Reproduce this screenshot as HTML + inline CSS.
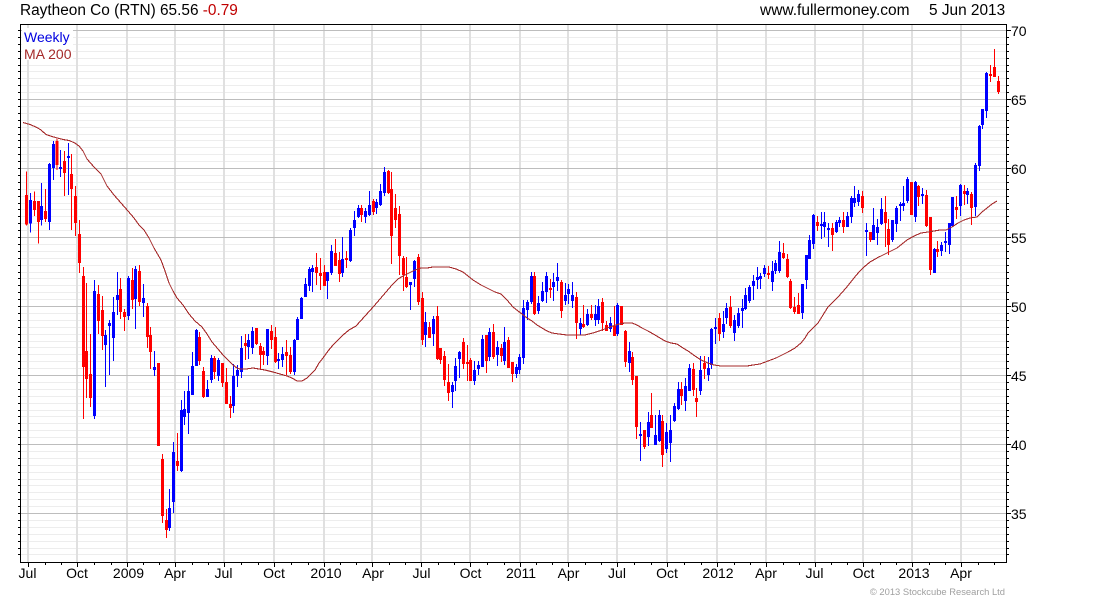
<!DOCTYPE html>
<html><head><meta charset="utf-8"><title>Raytheon Co (RTN)</title>
<style>
html,body{margin:0;padding:0;background:#fff;width:1100px;height:600px;overflow:hidden}
svg{display:block;position:absolute;left:0;top:0}
text{font-family:"Liberation Sans",Arial,sans-serif}
</style></head><body>
<svg width="1100" height="600" viewBox="0 0 1100 600" xmlns="http://www.w3.org/2000/svg">
<defs>
<clipPath id="c"><rect x="21" y="25" width="985" height="537"/></clipPath>
<path id="h" d="M18 37.5H1009M18 44.5H1009M18 51.5H1009M18 58.5H1009M18 65.5H1009M18 71.5H1009M18 78.5H1009M18 85.5H1009M18 92.5H1009M18 106.5H1009M18 113.5H1009M18 120.5H1009M18 127.5H1009M18 134.5H1009M18 140.5H1009M18 147.5H1009M18 154.5H1009M18 161.5H1009M18 175.5H1009M18 182.5H1009M18 189.5H1009M18 196.5H1009M18 203.5H1009M18 209.5H1009M18 216.5H1009M18 223.5H1009M18 230.5H1009M18 244.5H1009M18 251.5H1009M18 258.5H1009M18 265.5H1009M18 272.5H1009M18 278.5H1009M18 285.5H1009M18 292.5H1009M18 299.5H1009M18 313.5H1009M18 320.5H1009M18 327.5H1009M18 334.5H1009M18 341.5H1009M18 347.5H1009M18 354.5H1009M18 361.5H1009M18 368.5H1009M18 382.5H1009M18 389.5H1009M18 396.5H1009M18 403.5H1009M18 410.5H1009M18 416.5H1009M18 423.5H1009M18 430.5H1009M18 437.5H1009M18 451.5H1009M18 458.5H1009M18 465.5H1009M18 472.5H1009M18 479.5H1009M18 485.5H1009M18 492.5H1009M18 499.5H1009M18 506.5H1009M18 520.5H1009M18 527.5H1009M18 534.5H1009M18 541.5H1009M18 548.5H1009M18 554.5H1009"/>
<path id="m" d="M18 30.5H1011M18 99.5H1011M18 168.5H1011M18 237.5H1011M18 306.5H1011M18 375.5H1011M18 444.5H1011M18 513.5H1011"/>
</defs>
<g shape-rendering="crispEdges" fill="none" stroke-width="1">
<use href="#h" stroke="#000"/>
<use href="#m" stroke="#000"/>
<rect x="21" y="25" width="985" height="537" fill="#fff" stroke="none"/>
<use href="#h" stroke="#ededed" clip-path="url(#c)"/>
<path stroke="#e0e0e0" stroke-width="2" d="M28 25V562M77 25V562M127 25V562M175 25V562M224 25V562M274 25V562M324 25V562M372 25V562M421 25V562M470 25V562M520 25V562M568 25V562M617 25V562M667 25V562M717 25V562M766 25V562M815 25V562M863 25V562M912 25V562M961 25V562"/>
<use href="#m" stroke="#bdbdbd" clip-path="url(#c)"/>
<path stroke="#000" d="M20.5 24.5H1006.5V562.5H20.5Z"/>
<path stroke="#000" d="M28.5 563V567M77.5 563V567M127.5 563V567M175.5 563V567M224.5 563V567M274.5 563V567M324.5 563V567M372.5 563V567M421.5 563V567M470.5 563V567M520.5 563V567M568.5 563V567M617.5 563V567M667.5 563V567M717.5 563V567M766.5 563V567M815.5 563V567M863.5 563V567M912.5 563V567M961.5 563V567M45.5 563V565M61.5 563V565M94.5 563V565M111.5 563V565M143.5 563V565M159.5 563V565M192.5 563V565M208.5 563V565M241.5 563V565M258.5 563V565M291.5 563V565M308.5 563V565M340.5 563V565M356.5 563V565M389.5 563V565M405.5 563V565M438.5 563V565M454.5 563V565M487.5 563V565M504.5 563V565M536.5 563V565M552.5 563V565M585.5 563V565M601.5 563V565M634.5 563V565M651.5 563V565M684.5 563V565M701.5 563V565M734.5 563V565M750.5 563V565M783.5 563V565M799.5 563V565M831.5 563V565M847.5 563V565M880.5 563V565M896.5 563V565M929.5 563V565M945.5 563V565M978.5 563V565M994.5 563V565"/>
</g>
<rect x="22" y="28" width="51" height="32" fill="#fff"/>

<!-- candles strip 1 -->
<g fill="none" shape-rendering="crispEdges" transform="translate(24.1667 135) scale(.33333)">
<path stroke="#f00" stroke-width="3" d="M7 110V272M31 170V243M43 198V326M64 162V261M98 12V105M121 48V183M142 57V285M154 153V303M166 255V414M178 396V852M187 444V789M199 597V816M223 450V597M235 483V645M289 429V552M301 522V588M325 399V522M346 390V513M370 504V639M379 576V702M403 684V933M415 957V1164M427 1122V1209M460 894V1008"/>
<path stroke="#f00" stroke-width="9" d="M7 180V268M31 198V225M43 198V261M64 228V252M98 18V90M121 78V114M142 117V162M154 183V264M166 297V384M178 423V696M187 648V732M199 717V789M223 477V558M235 525V603M289 462V531M301 531V546M325 435V495M346 408V501M370 513V606M379 600V651M403 684V933M415 972V1143M427 1155V1185M460 978V993"/>
<path stroke="#00f" stroke-width="3" d="M19 174V293M52 144V272M76 84V285M88 18V135M109 45V126M133 24V180M211 435V852M244 585V756M256 555V720M268 486V678M280 411V540M313 423V555M334 393V582M358 447V546M391 648V723M436 1062V1188M448 921V1134M472 795V1011M481 768V870M493 723V897"/>
<path stroke="#00f" stroke-width="9" d="M19 195V266M52 213V255M76 87V261M88 27V99M109 96V102M133 63V69M211 468V843M244 600V630M256 564V573M268 531V609M280 480V495M313 429V543M334 402V492M358 489V504M391 696V705M436 1119V1179M448 951V1101M472 825V1008M481 822V846M493 768V834"/>
</g>
<!-- strip 2 -->
<g fill="none" shape-rendering="crispEdges" transform="translate(190.1667 165) scale(.33333)">
<path stroke="#f00" stroke-width="3" d="M28 501V600M40 606V699M73 573V642M97 594V666M109 609V717M121 693V759M166 507V585M199 489V540M211 534V612M220 546V600M244 480V552M256 486V594M289 525V630M301 546V627M379 264V360M391 279V375M403 300V363M436 222V303M448 261V351M469 258V309"/>
<path stroke="#f00" stroke-width="9" d="M28 516V588M40 618V696M73 579V621M97 594V654M109 651V717M121 717V729M166 534V543M199 489V537M211 543V570M220 558V570M244 498V525M256 516V591M289 561V573M301 570V621M379 306V324M391 324V333M403 321V363M436 264V303M448 285V327M469 279V285"/>
<path stroke="#00f" stroke-width="3" d="M7 561V690M19 492V603M52 645V696M64 570V654M85 579V648M130 597V744M142 600V666M154 513V639M175 507V582M187 486V567M232 492V600M265 564V612M277 546V606M313 522V630M322 456V525M334 396V462M346 339V396M358 306V378M367 300V381M412 321V402M424 240V330M457 216V336M481 189V291M493 138V213"/>
<path stroke="#00f" stroke-width="9" d="M7 603V690M19 495V603M52 672V696M64 579V645M85 585V633M130 633V723M142 615V633M154 549V621M175 525V546M187 498V549M232 492V573M265 582V588M277 567V585M313 525V621M322 462V525M334 399V462M346 357V396M358 312V363M367 309V321M412 321V348M424 258V324M457 282V324M481 195V288M493 165V189"/>
</g>
<!-- strip 3 -->
<g fill="none" shape-rendering="crispEdges" transform="translate(356.1667 165) scale(.33333)">
<path stroke="#f00" stroke-width="3" d="M16 120V171M52 102V150M97 15V87M106 21V297M118 87V189M130 123V330M142 273V378M151 276V369M187 267V420M199 381V540M220 471V519M244 423V585M253 549V597M265 558V663M277 597V708M322 519V612M334 540V648M343 579V648M391 510V624M412 477V582M436 537V591M457 516V609M469 591V651"/>
<path stroke="#f00" stroke-width="9" d="M16 129V150M52 108V141M97 18V84M106 72V213M118 129V165M130 147V273M142 279V330M151 336V366M187 276V411M199 399V525M220 486V519M244 453V582M253 549V585M265 573V645M277 651V684M322 531V597M334 591V597M343 585V648M391 510V588M412 501V576M436 549V573M457 525V609M469 591V627"/>
<path stroke="#00f" stroke-width="3" d="M7 120V159M28 129V174M40 78V153M61 102V147M73 57V123M85 6V93M163 351V435M175 285V366M208 441V546M232 453V543M289 651V729M298 579V678M310 558V639M355 588V660M367 588V630M379 510V606M400 489V588M424 528V603M445 486V600M481 597V639M490 567V627"/>
<path stroke="#00f" stroke-width="9" d="M7 129V156M28 138V156M40 120V150M61 111V129M73 78V120M85 21V84M163 351V360M175 288V342M208 471V510M232 462V507M289 660V681M298 603V648M310 561V582M355 615V648M367 600V612M379 522V606M400 501V576M424 546V570M445 531V588M481 606V627M490 576V615"/>
</g>
<!-- strip 4 -->
<g fill="none" shape-rendering="crispEdges" transform="translate(522.1667 260) scale(.33333)">
<path stroke="#f00" stroke-width="3" d="M37 36V165M85 57V114M118 60V174M163 96V237M184 135V204M208 135V180M241 114V213M253 183V213M277 138V228M298 138V195M310 210V321M331 276V375M343 348V537M367 510V567M388 399V504M421 465V621M478 366V435"/>
<path stroke="#f00" stroke-width="9" d="M37 48V162M85 84V90M118 66V153M163 111V189M184 192V201M208 162V174M241 126V189M253 195V213M277 198V228M298 138V195M310 213V306M331 291V360M343 348V501M367 510V561M388 465V504M421 483V585M478 387V408"/>
<path stroke="#00f" stroke-width="3" d="M4 120V312M16 120V180M28 36V132M49 108V162M61 66V126M73 36V129M94 39V123M106 9V93M130 69V135M139 72V132M151 66V144M175 174V225M196 147V198M220 135V198M229 117V192M265 171V216M286 129V228M322 246V336M355 486V603M379 456V558M400 465V555M412 450V546M433 489V579M445 465V606M457 429V486M469 366V450M490 354V453"/>
<path stroke="#00f" stroke-width="9" d="M4 144V294M16 126V150M28 48V126M49 129V153M61 93V123M73 48V96M94 66V81M106 51V63M130 105V123M139 87V102M151 105V123M175 189V207M196 162V195M220 162V180M229 138V180M265 189V207M286 135V222M322 273V309M355 522V528M379 486V531M400 525V555M412 465V543M433 516V567M445 510V549M457 438V483M469 387V447M490 378V423"/>
</g>
<!-- strip 5 -->
<g fill="none" shape-rendering="crispEdges" transform="translate(688.1667 180) scale(.33333)">
<path stroke="#f00" stroke-width="3" d="M16 549V648M25 624V711M49 528V597M94 399V483M127 348V444M241 258V297M286 189V237M298 222V294M307 297V387M319 351V402M331 339V402M388 108V153M433 129V213M466 96V159"/>
<path stroke="#f00" stroke-width="9" d="M16 567V630M25 654V666M49 549V567M94 414V462M127 381V438M241 279V285M286 219V234M298 237V291M307 303V384M319 381V396M331 375V402M388 126V138M433 144V165M466 120V141"/>
<path stroke="#00f" stroke-width="3" d="M4 552V633M37 528V645M61 531V603M70 444V567M82 414V492M106 393V474M115 369V432M139 405V483M151 384V444M163 357V444M172 324V390M184 315V369M196 285V360M208 261V327M217 279V327M229 255V291M253 243V333M262 240V282M274 183V279M343 312V417M355 225V327M364 165V237M376 102V207M400 96V177M409 96V171M421 129V201M445 120V159M454 111V141M478 96V141M490 48V129"/>
<path stroke="#00f" stroke-width="9" d="M4 564V633M37 570V633M61 564V585M70 447V555M82 441V447M106 432V456M115 384V414M139 420V459M151 399V438M163 384V393M172 345V387M184 321V363M196 303V318M208 291V300M217 288V297M229 264V282M253 273V306M262 249V273M274 216V273M343 312V399M355 225V300M364 180V237M376 105V192M400 132V138M409 126V141M421 144V150M445 126V156M454 120V129M478 108V141M490 54V111"/>
</g>
<!-- strip 6 -->
<g fill="none" shape-rendering="crispEdges" transform="translate(854.1667 40) scale(.33333)">
<path stroke="#f00" stroke-width="3" d="M25 453V519M49 576V606M94 468V621M103 537V645M172 426V525M193 435V498M217 450V561M229 531V705M250 603V651M307 468V537M331 435V495M352 456V555M409 75V126M421 27V111M433 108V162"/>
<path stroke="#f00" stroke-width="9" d="M25 468V504M49 576V600M94 516V549M103 567V615M172 426V525M193 438V471M217 465V558M229 531V690M250 627V636M307 501V510M331 453V462M352 462V504M409 102V108M421 81V111M433 123V156"/>
<path stroke="#00f" stroke-width="3" d="M1 438V501M13 450V498M37 549V648M58 504V600M70 537V615M82 474V555M115 540V606M127 498V576M139 486V543M148 438V513M160 411V489M184 423V546M205 444V492M241 624V699M262 606V648M274 576V636M286 549V642M295 471V558M319 432V528M340 444V492M364 369V528M376 255V393M385 207V267M397 96V234"/>
<path stroke="#00f" stroke-width="9" d="M1 474V489M13 462V486M37 570V576M58 555V600M70 561V579M82 507V552M115 540V600M127 504V552M139 492V498M148 489V498M160 417V483M184 426V531M205 462V468M241 627V699M262 615V633M274 603V609M286 549V615M295 471V558M319 435V498M340 453V465M364 375V501M376 258V378M385 207V255M397 99V213"/>
</g>

<!-- MA 200 -->
<polyline fill="none" stroke="#a52a2a" stroke-width="1.1" shape-rendering="crispEdges" points="23,122.5 30,124.5 37,127.5 41,130 46,134.5 52,136.5 57,138 63,139.5 69,140.5 75,143 79,146 83,151 87,159 94,167 101,174 107,186 114,195 121,203 128,211 134,218 139,225 144,230 149,238 154,248 161,260 165,271 169,283 173,291 177,298 183,305 189,314 195,321 202,327 207,334 212,342 218,349 223,355 228,360 233,365 237,368 240,369 246,369 253,368 259,369 265,370 273,372 280,374 287,376 292,378 297,381 302,381 307,378 311,374 315,370 319,363 323,358 328,351 333,345 338,340 343,335 349,330 356,326 365,316 374,306 380,299 386,292 392,285 398,279 403,276 409,273 415,270 421,268 427,268 433,267 441,267 449,267 456,269 463,272 468,276 473,280 481,285 489,289 495,292 501,294 507,300 513,307 518,311 522,314 527,318 532,321 537,325 542,328 547,331 552,333 559,334 567,335 576,335 585,335 593,333 602,330 610,327 619,324 625,323 632,323 637,325 642,328 648,331 655,335 660,338 665,341 671,343 677,344 683,348 688,351 695,356 701,360 708,363 714,365 721,366 730,366 739,366 747,366 753,365 760,364 768,361 776,358 782,355 788,352 795,348 801,343 805,338 808,333 813,328 818,323 823,315 828,307 833,302 838,297 846,288 854,278 859,272 864,267 870,262 877,258 885,254 891,251 897,248 902,244 907,240 914,236 921,233 928,232 934,231 940,230 946,230 952,227 958,223 964,220 970,218 977,217 982,212 987,208 992,204 997,201"/>

<!-- text -->
<text x="20" y="15" font-size="15.4" fill="#000">Raytheon Co (RTN) 65.56 <tspan fill="#c00000">-0.79</tspan></text>
<text x="760" y="15" font-size="15.5" fill="#000">www.fullermoney.com</text>
<text x="929" y="15" font-size="15.4" fill="#000">5 Jun 2013</text>
<text x="24" y="42" font-size="14" fill="#0000e0">Weekly</text>
<text x="24" y="59" font-size="14" fill="#a52a2a">MA 200</text>

<g font-size="14" fill="#000">
<text x="1011" y="36">70</text>
<text x="1011" y="105">65</text>
<text x="1011" y="174">60</text>
<text x="1011" y="243">55</text>
<text x="1011" y="312">50</text>
<text x="1011" y="381">45</text>
<text x="1011" y="450">40</text>
<text x="1011" y="519">35</text>
</g>
<g font-size="14" fill="#000" text-anchor="middle">
<text x="27.5" y="578">Jul</text>
<text x="77" y="578">Oct</text>
<text x="128.5" y="578">2009</text>
<text x="175" y="578">Apr</text>
<text x="223.5" y="578">Jul</text>
<text x="274" y="578">Oct</text>
<text x="326" y="578">2010</text>
<text x="373" y="578">Apr</text>
<text x="421.5" y="578">Jul</text>
<text x="470.5" y="578">Oct</text>
<text x="521" y="578">2011</text>
<text x="568.5" y="578">Apr</text>
<text x="617" y="578">Jul</text>
<text x="667" y="578">Oct</text>
<text x="718" y="578">2012</text>
<text x="766" y="578">Apr</text>
<text x="814.5" y="578">Jul</text>
<text x="863.5" y="578">Oct</text>
<text x="914" y="578">2013</text>
<text x="961" y="578">Apr</text>
</g>
<text x="1005" y="595" font-size="9.4" fill="#a0a0a0" text-anchor="end">© 2013 Stockcube Research Ltd</text>
</svg>
</body></html>
